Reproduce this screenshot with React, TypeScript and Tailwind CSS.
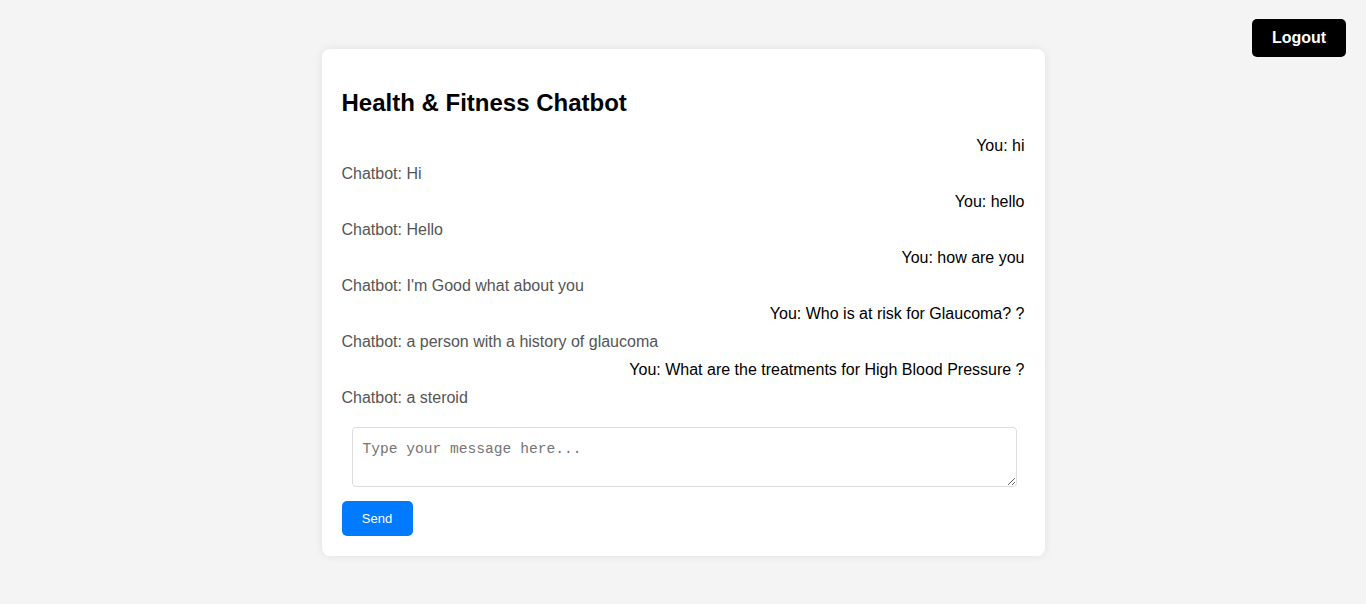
const messages: { from: "You" | "Chatbot"; text: string }[] = [
  { from: "You", text: "hi" },
  { from: "Chatbot", text: "Hi" },
  { from: "You", text: "hello" },
  { from: "Chatbot", text: "Hello" },
  { from: "You", text: "how are you" },
  { from: "Chatbot", text: "I'm Good what about you" },
  { from: "You", text: "Who is at risk for Glaucoma? ?" },
  { from: "Chatbot", text: "a person with a history of glaucoma" },
  { from: "You", text: "What are the treatments for High Blood Pressure ?" },
  { from: "Chatbot", text: "a steroid" },
];

export default function App() {
  return (
    <div className="relative min-h-[604px] bg-[#f4f4f4] pt-[49px] font-['Liberation_Sans',Arial,sans-serif]">
      <button className="absolute right-[20px] top-[19px] h-[38px] w-[94px] rounded-[5px] bg-black text-[16px] font-bold text-white">
        Logout
      </button>

      <div className="mx-auto w-[723px] rounded-[8px] bg-white p-[20px] shadow-[0_0_10px_rgba(0,0,0,0.08)]">
        <h2 className="my-[20px] text-[24px] leading-[28px] font-bold text-black">
          Health &amp; Fitness Chatbot
        </h2>

        <div className="flex flex-col gap-[10px] text-[16px] leading-[18px]">
          {messages.map((m, i) => (
            <div
              key={i}
              className={m.from === "You" ? "text-right text-black" : "text-left text-[#555]"}
            >
              {m.from}: {m.text}
            </div>
          ))}
        </div>

        <textarea
          placeholder="Type your message here..."
          className="mt-[20px] ml-[10px] block h-[60px] w-[665px] resize rounded-[4px] border border-[#ddd] px-[10px] pt-[13px] pb-[8px] font-['Liberation_Mono',monospace] text-[14.6px] leading-[17px] placeholder:text-[#757575] outline-none"
        />

        <button className="mt-[14px] h-[35px] w-[71px] rounded-[5px] bg-[#007bff] text-[13px] text-white">
          Send
        </button>
      </div>
    </div>
  );
}
